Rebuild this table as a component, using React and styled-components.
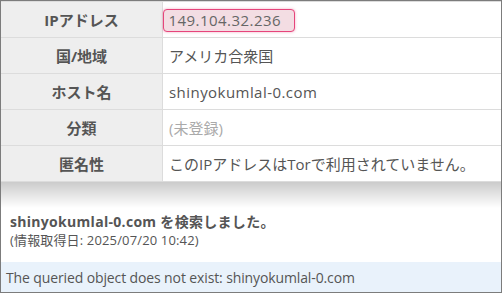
import React from "react";
import styled, { createGlobalStyle } from "styled-components";

const GlobalStyle = createGlobalStyle`
    html, body {
        margin: 0;
        padding: 0;
        background: #fff;
    }
    body {
        font-family: "Open Sans", "Noto Sans CJK JP", sans-serif;
        color: #555;
    }
`

const Frame = styled.div`
    width: 502px;
    height: 293px;
    box-sizing: border-box;
    border: 1px solid #7c7c7c;
    display: flex;
    flex-direction: column;
    overflow: hidden;
    background: #fff;
`

const InfoTable = styled.div`
    display: grid;
    grid-template-columns: 162px 1fr;
    border-top: 1px solid #dcdcdc;
    position: relative;

    &::after {
        content: "";
        position: absolute;
        left: 0;
        right: 0;
        top: 100%;
        height: 26px;
        background: linear-gradient(#cbcbcb, rgba(255, 255, 255, 0));
    }
`

const Label = styled.div`
    height: 35px;
    display: flex;
    align-items: center;
    justify-content: center;
    background: #eeeeee;
    border-bottom: 1px solid #dcdcdc;
    border-right: 1px solid #dcdcdc;
    font-size: 15px;
    font-weight: bold;
    color: #555;
`

const Value = styled.div`
    height: 35px;
    display: flex;
    align-items: center;
    padding: 0 6px;
    border-bottom: 1px solid #dcdcdc;
    font-size: 15px;
    letter-spacing: ${props => props.$latin ? "0.45px" : "0"};
    color: ${props => props.$muted ? "#aaa" : "#555"};
`

const Highlight = styled.span`
    margin-left: -6px;
    margin-top: 1px;
    padding: 2px 13px 2px 4.5px;
    border: 1.5px solid #e6457b;
    border-radius: 4px;
    background: #f3dde3;
    box-shadow: 0 0 3px rgba(230, 69, 123, 0.45);
    color: #666;
    line-height: 17px;
`

const Summary = styled.div`
    padding: 31px 9px 0;
`

const SummaryTitle = styled.div`
    font-size: 14px;
    font-weight: bold;
    line-height: 18px;
    letter-spacing: 0.3px;
    color: #555;
`

const SummaryDate = styled.div`
    font-size: 13px;
    line-height: 18px;
    letter-spacing: 0.15px;
    color: #555;
`

const Notice = styled.div`
    margin-top: auto;
    height: 30px;
    display: flex;
    align-items: center;
    padding: 0 5px;
    background: #e9f2fb;
    font-size: 14px;
    letter-spacing: -0.12px;
    color: #555;
`

const rows = [
    { label: "IPアドレス", value: "149.104.32.236", highlight: true, latin: true },
    { label: "国/地域", value: "アメリカ合衆国" },
    { label: "ホスト名", value: "shinyokumlal-0.com", latin: true },
    { label: "分類", value: "(未登録)", muted: true },
    { label: "匿名性", value: "このIPアドレスはTorで利用されていません。" },
]

const App = () => {
    return <>
        <GlobalStyle />
        <Frame>
            <InfoTable>
                {rows.map(row => <React.Fragment key={row.label}>
                    <Label>{row.label}</Label>
                    <Value $muted={row.muted} $latin={row.latin}>
                        {row.highlight ? <Highlight>{row.value}</Highlight> : row.value}
                    </Value>
                </React.Fragment>)}
            </InfoTable>

            <Summary>
                <SummaryTitle>shinyokumlal-0.com を検索しました。</SummaryTitle>
                <SummaryDate>(情報取得日: 2025/07/20 10:42)</SummaryDate>
            </Summary>

            <Notice>The queried object does not exist: shinyokumlal-0.com</Notice>
        </Frame>
    </>
}

export default App;
